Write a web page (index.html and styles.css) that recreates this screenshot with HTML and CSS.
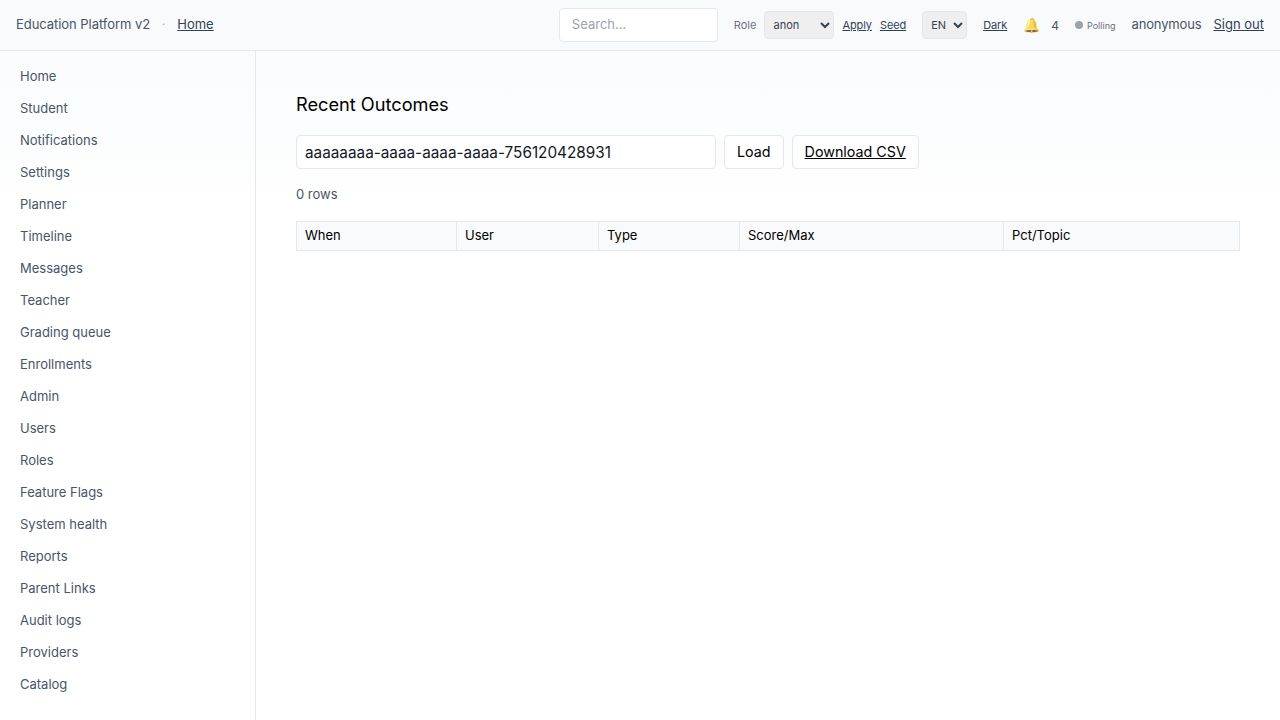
FILE: index.html
```html
<!DOCTYPE html>
<html lang="en">
<head>
  <meta charset="UTF-8">
  <meta name="viewport" content="width=device-width, initial-scale=1.0">
  <title>Recent Outcomes</title>
  <link rel="stylesheet" href="styles.css">
</head>
<body>
  <header class="topbar">
    <div class="topbar-left">
      <span class="brand">Education Platform v2</span>
      <span class="dot-sep">·</span>
      <a href="#" class="crumb">Home</a>
    </div>
    <div class="topbar-right">
      <input type="text" class="search" placeholder="Search...">
      <div class="role-box">
        <span class="small-label">Role</span>
        <select class="small-select role-select"><option>anon</option></select>
        <a href="#" class="small-link">Apply</a>
        <a href="#" class="small-link">Seed</a>
      </div>
      <select class="small-select lang-select"><option>EN</option></select>
      <a href="#" class="small-link">Dark</a>
      <div class="bell-box">
        <span class="bell">🔔</span>
        <span class="bell-count">4</span>
      </div>
      <div class="status">
        <span class="status-dot"></span>
        <span>Polling</span>
      </div>
      <div class="user-box">
        <span class="username">anonymous</span>
        <a href="#" class="crumb">Sign out</a>
      </div>
    </div>
  </header>

  <div class="layout">
    <nav class="sidebar">
      <a href="#">Home</a>
      <a href="#">Student</a>
      <a href="#">Notifications</a>
      <a href="#">Settings</a>
      <a href="#">Planner</a>
      <a href="#">Timeline</a>
      <a href="#">Messages</a>
      <a href="#">Teacher</a>
      <a href="#">Grading queue</a>
      <a href="#">Enrollments</a>
      <a href="#">Admin</a>
      <a href="#">Users</a>
      <a href="#">Roles</a>
      <a href="#">Feature Flags</a>
      <a href="#">System health</a>
      <a href="#">Reports</a>
      <a href="#">Parent Links</a>
      <a href="#">Audit logs</a>
      <a href="#">Providers</a>
      <a href="#">Catalog</a>
    </nav>

    <main class="content">
      <h2>Recent Outcomes</h2>
      <div class="controls">
        <input type="text" class="user-input" value="aaaaaaaa-aaaa-aaaa-aaaa-756120428931">
        <button class="btn">Load</button>
        <a href="#" class="btn">Download CSV</a>
      </div>
      <p class="row-count">0 rows</p>
      <table class="outcomes">
        <thead>
          <tr>
            <th class="col-when">When</th>
            <th class="col-user">User</th>
            <th class="col-type">Type</th>
            <th class="col-score">Score/Max</th>
            <th>Pct/Topic</th>
          </tr>
        </thead>
        <tbody></tbody>
      </table>
    </main>
  </div>
</body>
</html>
```

FILE: styles.css
```css
* {
  box-sizing: border-box;
}
html, body {
  height: 100%;
}
body {
  margin: 0;
  font-family: Inter, "Noto Sans", sans-serif;
  font-size: 13px;
  color: #475569;
  background: linear-gradient(180deg, #f8fafc 0, #ffffff 220px) no-repeat;
  overflow: hidden;
}
a {
  color: inherit;
}

.topbar {
  height: 51px;
  display: flex;
  align-items: center;
  justify-content: space-between;
  padding: 0 16px;
  border-bottom: 1px solid #e5e7eb;
  background: #f9fafb;
}
.topbar-left,
.topbar-right,
.role-box,
.bell-box,
.status,
.user-box {
  display: flex;
  align-items: center;
}
.topbar-left {
  padding-bottom: 2px;
}
.brand {
  letter-spacing: -0.05px;
}
.dot-sep {
  margin: 0 12px;
  color: #9ca3af;
  font-size: 11px;
}
.crumb {
  color: #334155;
}
.topbar-right {
  gap: 16px;
}
.search {
  width: 159px;
  height: 34px;
  padding: 0 12px 2px;
  border: 1px solid #e5e7eb;
  border-radius: 4px;
  background: #fff;
  font: inherit;
  color: #334155;
}
.search::placeholder {
  color: #9ca3af;
}
.role-box {
  gap: 8px;
}
.small-label {
  font-size: 11px;
  color: #6b7280;
}
.small-select {
  height: 28px;
  border: 1px solid #e5e7eb;
  border-radius: 4px;
  background-color: #efefef;
  font: inherit;
  font-size: 11px;
  color: #374151;
  padding: 0 4px;
}
.role-select {
  width: 70px;
}
.lang-select {
  width: 45px;
}
.small-link {
  font-size: 11px;
  letter-spacing: -0.1px;
  color: #334155;
}
.bell-box {
  gap: 11px;
}
.bell {
  font-size: 14px;
  margin-bottom: 2px;
  opacity: 0.75;
}
.bell-count {
  font-size: 12px;
  color: #4b5563;
}
.status {
  gap: 4px;
  font-size: 9px;
  color: #6b7280;
}
.status-dot {
  width: 8px;
  height: 8px;
  border-radius: 50%;
  background: #9ca3af;
}
.user-box {
  gap: 12px;
  padding-bottom: 2px;
}
.username {
  letter-spacing: -0.15px;
}

.layout {
  display: flex;
  height: calc(100% - 51px);
}
.sidebar {
  width: 256px;
  flex: none;
  padding: 9px 0 0 8px;
  border-right: 1px solid #e5e7eb;
}
.sidebar a {
  display: block;
  height: 32px;
  line-height: 32px;
  padding: 0 12px;
  text-decoration: none;
}

.content {
  flex: 1;
  padding: 40px;
  color: #111827;
}
.content h2 {
  margin: 0 0 18px;
  font-size: 18.2px;
  line-height: 26px;
  font-weight: 400;
  color: #000;
}
.controls {
  display: flex;
  gap: 8px;
  height: 34px;
}
.user-input {
  width: 420px;
  height: 34px;
  padding: 0 8px;
  border: 1px solid #e5e7eb;
  border-radius: 4px;
  background: #fff;
  font: inherit;
  font-size: 15.3px;
  color: #111827;
}
.btn {
  display: flex;
  align-items: center;
  height: 34px;
  padding: 0 12px 2px;
  border: 1px solid #e5e7eb;
  border-radius: 4px;
  background: #fff;
  font: inherit;
  font-size: 14.3px;
  color: #000;
}
.row-count {
  margin: 16px 0 18px;
  line-height: 18px;
  color: #475569;
}
.outcomes {
  width: 944px;
  border-collapse: collapse;
  table-layout: fixed;
}
.outcomes th {
  height: 29px;
  padding: 0 8px 2px;
  border: 1px solid #e5e7eb;
  background: #f9fafb;
  font-weight: 400;
  text-align: left;
  color: #000;
}
.col-when {
  width: 160px;
}
.col-user {
  width: 142px;
}
.col-type {
  width: 141px;
}
.col-score {
  width: 264px;
}
```
